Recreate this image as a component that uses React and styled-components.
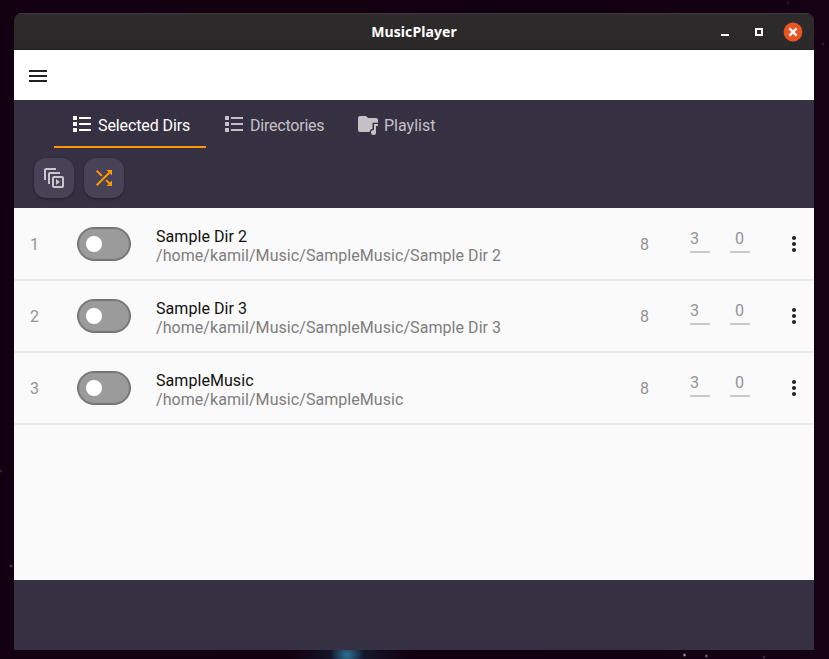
import React from 'react';
import styled, { createGlobalStyle } from 'styled-components';

const GlobalStyle = createGlobalStyle`
  *, *::before, *::after { box-sizing: border-box; }
  html, body { margin: 0; padding: 0; }
`;

const Desktop = styled.div`
  width: 829px;
  height: 659px;
  padding: 13px 15px 9px 14px;
  overflow: hidden;
  background-color: #10000f;
  background-image:
    radial-gradient(ellipse 17px 18px at 347px 655px, rgba(48, 125, 160, 0.85), transparent),
    radial-gradient(ellipse 60px 20px at 350px 655px, rgba(20, 50, 80, 0.6), transparent),
    radial-gradient(circle 2px at 684.5px 655px, #c6c2cc, transparent),
    radial-gradient(circle 2px at 706.5px 656px, #8f8b94, transparent),
    radial-gradient(circle 2px at 764px 657px, #4a4350, transparent),
    radial-gradient(circle 2px at 11px 566px, #5a5360, transparent),
    radial-gradient(circle 2px at 823px 44px, #3a2d3e, transparent),
    radial-gradient(circle 2px at 788px 3px, #30243a, transparent),
    radial-gradient(circle 2px at 1px 471px, #40344a, transparent),
    linear-gradient(90deg, #130010, #12000f 40%, #110011 70%, #150014);
`;

const Window = styled.div`
  width: 800px;
  height: 637px;
  display: flex;
  flex-direction: column;
  overflow: hidden;
  border-radius: 8px 8px 0 0;
  font-family: Roboto, sans-serif;
  font-size: 16px;
  line-height: 19px;
`;

const TitleBar = styled.div`
  height: 37px;
  flex: none;
  display: grid;
  grid-template-columns: 1fr auto 1fr;
  align-items: center;
  background: linear-gradient(#2d2b2b, #2a2828);
  box-shadow: inset 0 1px #403e3f, inset 0 -1px #242222;
`;

const Title = styled.div`
  grid-column: 2;
  color: #fff;
  font: 700 14px/20px 'Noto Sans', sans-serif;
  letter-spacing: 0.1px;
`;

const WindowControls = styled.div`
  display: flex;
  justify-content: flex-end;
  gap: 14px;
  padding-right: 11px;
`;

const Icon = styled.svg`
  width: ${(p) => p.$size || 24}px;
  height: ${(p) => p.$size || 24}px;
  display: block;
  flex: none;
  fill: currentColor;
`;

const AppBar = styled.header`
  height: 50px;
  flex: none;
  display: flex;
  align-items: center;
  padding: 2px 12px 0;
  background: #fff;
  color: #212121;
`;

const Toolbar = styled.div`
  height: 108px;
  flex: none;
  background: #363142;
`;

const Tabs = styled.nav`
  display: flex;
  height: 48px;
  padding-left: 40px;
`;

const Tab = styled.div`
  width: ${(p) => p.$width}px;
  height: 48px;
  display: flex;
  align-items: center;
  gap: 4px;
  padding: 0 0 0 16px;
  border-bottom: 2px solid ${(p) => (p.$active ? '#ff9800' : 'transparent')};
  color: ${(p) => (p.$active ? '#fff' : '#c3c1c6')};
  letter-spacing: ${(p) => p.$tracking || 0}px;

  span { padding-top: 5px; white-space: nowrap; }
  svg { margin-top: 2px; }
`;

const Actions = styled.div`
  display: flex;
  gap: 10px;
  padding: 10px 20px;
`;

const ActionButton = styled.div`
  width: 40px;
  height: 40px;
  display: flex;
  align-items: center;
  justify-content: center;
  border-radius: 12px;
  background: #474256;
  color: ${(p) => (p.$active ? '#ff9800' : '#c8c6cc')};
  box-shadow: 0 1px 3px rgba(0, 0, 0, 0.4);
`;

const List = styled.main`
  flex: 1;
  padding-top: 1px;
  background: #fafafa;
`;

const Row = styled.div`
  height: 72px;
  display: grid;
  grid-template-columns: 63px 79px 484px 50px 40px 52px 24px;
  align-items: center;
  border-bottom: 2px solid #e9e9e9;
  color: #949494;
`;

const Index = styled.div`
  padding: 1px 0 0 16px;
`;

const Toggle = styled.div`
  width: 54px;
  height: 34px;
  display: flex;
  align-items: center;
  padding-left: 8px;
  border: 1px solid #747474;
  border-radius: 17px;
  background: #9b9b9b;
  box-shadow: inset 0 0 0 1px #757575;

  &::before {
    content: '';
    width: 16px;
    height: 16px;
    border-radius: 50%;
    background: #fff;
  }
`;

const Details = styled.div`
  padding-top: 4px;
  letter-spacing: 0.06px;
`;

const Name = styled.div`
  color: #111;
`;

const Path = styled.div`
  color: #7d7d7d;
`;

const Count = styled.div`
  padding-top: 1px;
`;

const NumberField = styled.div`
  width: 20px;
  height: 24px;
  margin-bottom: 6px;
  padding-left: ${(p) => p.$indent || 0}px;
  border-bottom: 2px solid #c8c8c8;
  line-height: 20px;
`;

const More = styled.div`
  color: #212121;
`;

const Player = styled.footer`
  height: 70px;
  flex: none;
  background: #363142;
`;

const ListIcon = () => (
  <Icon viewBox="0 0 24 24">
    <path d="M3 4h4v4H3zM9 5h12v2H9zM3 10h4v4H3zM9 11h12v2H9zM3 16h4v4H3zM9 17h12v2H9z" />
  </Icon>
);

const FolderMusicIcon = () => (
  <Icon viewBox="0 0 24 24">
    <path d="M10 4H4C2.9 4 2 4.9 2 6v12c0 1.1.9 2 2 2h9.6c.2-1.6 1-2.7 2.9-3.2V10.8H22V8c0-1.1-.9-2-2-2h-8z" />
    <path d="M18 12h4v2h-2v6.5a2.5 2.5 0 1 1-2.5-2.5h.5z" />
  </Icon>
);

const directories = [
  { name: 'Sample Dir 2', path: '/home/kamil/Music/SampleMusic/Sample Dir 2' },
  { name: 'Sample Dir 3', path: '/home/kamil/Music/SampleMusic/Sample Dir 3' },
  { name: 'SampleMusic', path: '/home/kamil/Music/SampleMusic' },
];

export default function App() {
  return (
    <>
      <GlobalStyle />
      <Desktop>
        <Window>
          <TitleBar>
            <Title>MusicPlayer</Title>
            <WindowControls>
              <Icon $size={20} viewBox="0 0 20 20" color="#fff">
                <path d="M6 12h8v2H6z" />
              </Icon>
              <Icon $size={20} viewBox="0 0 20 20" color="#fff">
                <path fillRule="evenodd" d="M6 6h8v8H6zM8 8v4h4V8z" />
              </Icon>
              <Icon $size={20} viewBox="0 0 20 20">
                <circle cx="10" cy="10" r="9.4" fill="#e95420" />
                <path d="M6.4 6.4l7.2 7.2M13.6 6.4l-7.2 7.2" stroke="#fff" strokeWidth="2.3" />
              </Icon>
            </WindowControls>
          </TitleBar>
          <AppBar>
            <Icon viewBox="0 0 24 24">
              <path d="M3 18h18v-2H3v2zm0-5h18v-2H3v2zm0-7v2h18V6H3z" />
            </Icon>
          </AppBar>
          <Toolbar>
            <Tabs>
              <Tab $active $width={152} $tracking={-0.1}><ListIcon /><span>Selected Dirs</span></Tab>
              <Tab $width={134} $tracking={-0.22}><ListIcon /><span>Directories</span></Tab>
              <Tab $width={110}><FolderMusicIcon /><span>Playlist</span></Tab>
            </Tabs>
            <Actions>
              <ActionButton>
                <Icon viewBox="0 0 24 24">
                  <path d="M4 2C2.89 2 2 2.89 2 4V14H4V4H14V2H4M8 6C6.89 6 6 6.89 6 8V18H8V8H18V6H8M12 10C10.89 10 10 10.89 10 12V20C10 21.11 10.89 22 12 22H20C21.11 22 22 21.11 22 20V12C22 10.89 21.11 10 20 10H12M12 12H20V20H12V12M14 13V19L18 16L14 13Z" />
                </Icon>
              </ActionButton>
              <ActionButton $active>
                <Icon viewBox="0 0 24 24">
                  <path d="M10.59 9.17L5.41 4 4 5.41l5.17 5.17 1.42-1.41zM14.5 4l2.04 2.04L4 18.59 5.41 20 17.96 7.46 20 9.5V4h-5.5zm.33 9.41l-1.41 1.41 3.13 3.13L14.5 20H20v-5.5l-2.04 2.04-3.13-3.13z" />
                </Icon>
              </ActionButton>
            </Actions>
          </Toolbar>
          <List>
            {directories.map((dir, i) => (
              <Row key={dir.name}>
                <Index>{i + 1}</Index>
                <Toggle />
                <Details>
                  <Name>{dir.name}</Name>
                  <Path>{dir.path}</Path>
                </Details>
                <Count>8</Count>
                <NumberField>3</NumberField>
                <NumberField $indent={5}>0</NumberField>
                <More>
                  <Icon viewBox="0 0 24 24">
                    <path d="M12 8c1.1 0 2-.9 2-2s-.9-2-2-2-2 .9-2 2 .9 2 2 2zm0 2c-1.1 0-2 .9-2 2s.9 2 2 2 2-.9 2-2-.9-2-2-2zm0 6c-1.1 0-2 .9-2 2s.9 2 2 2 2-.9 2-2-.9-2-2-2z" />
                  </Icon>
                </More>
              </Row>
            ))}
          </List>
          <Player />
        </Window>
      </Desktop>
    </>
  );
}
